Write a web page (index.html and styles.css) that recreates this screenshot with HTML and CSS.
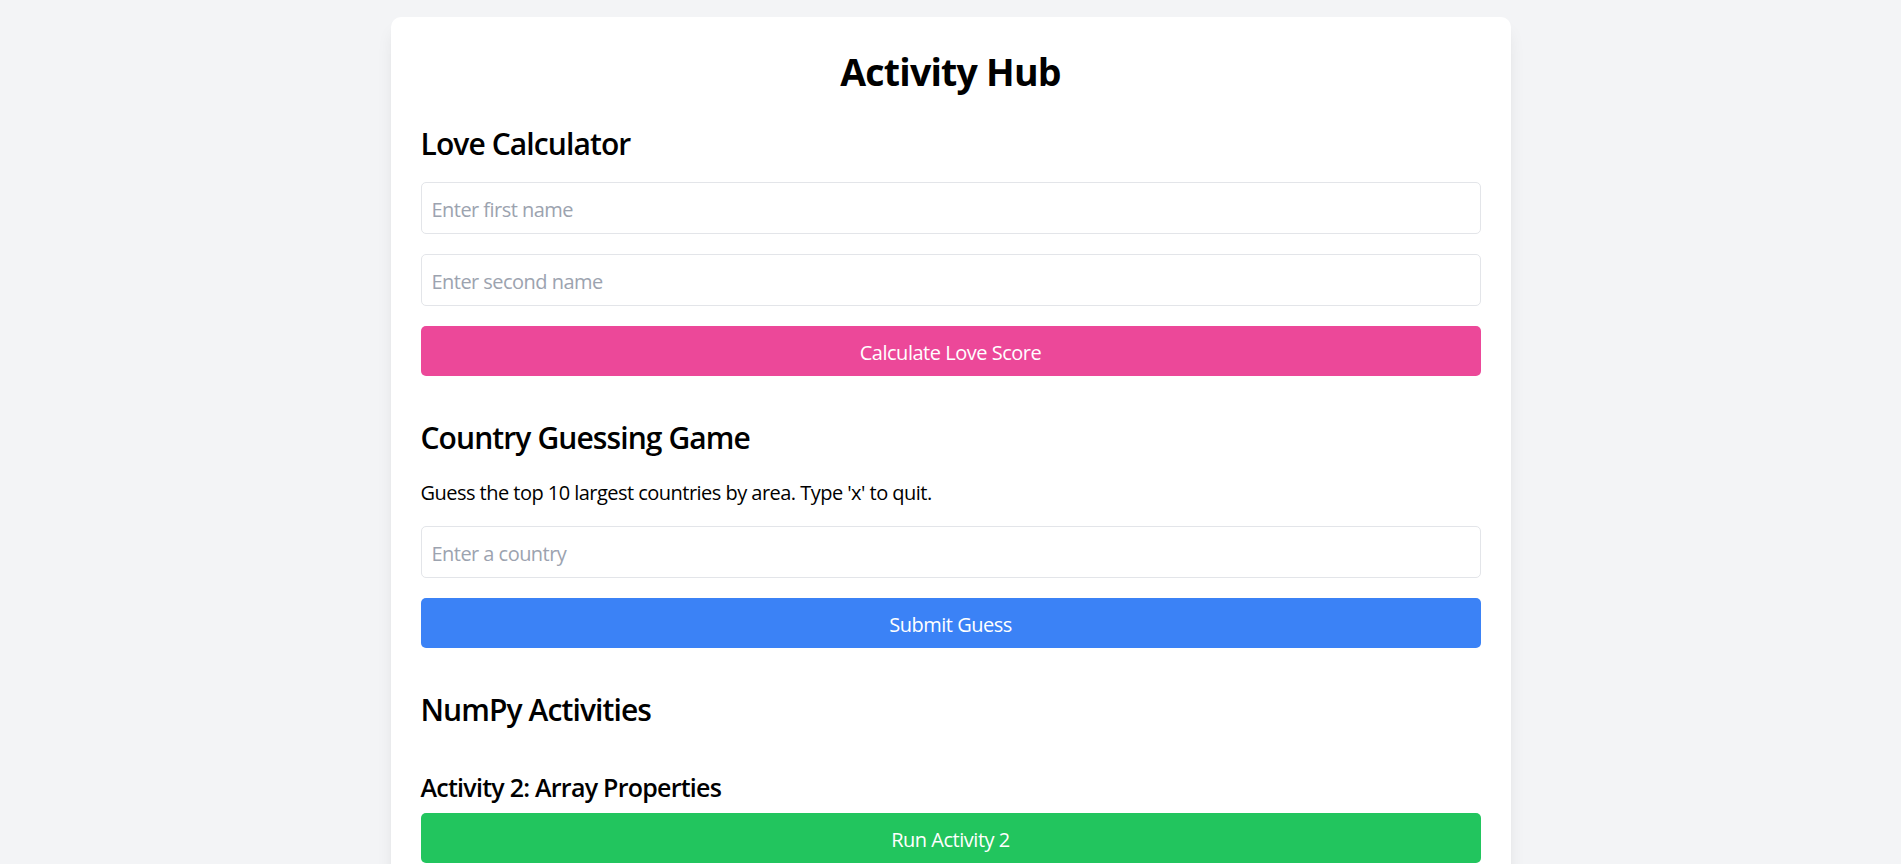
FILE: index.html
```html
<!DOCTYPE html>
<html lang="en">
<head>
<meta charset="utf-8">
<title>Activity Hub</title>
<link rel="stylesheet" href="styles.css">
</head>
<body>
<main class="card">
  <h1 class="title">Activity Hub</h1>

  <section class="section">
    <h2 class="section-title">Love Calculator</h2>
    <input class="field" type="text" placeholder="Enter first name">
    <input class="field" type="text" placeholder="Enter second name">
    <button class="btn btn-pink" type="button">Calculate Love Score</button>
  </section>

  <section class="section">
    <h2 class="section-title">Country Guessing Game</h2>
    <p class="text">Guess the top 10 largest countries by area. Type 'x' to quit.</p>
    <input class="field" type="text" placeholder="Enter a country">
    <button class="btn btn-blue" type="button">Submit Guess</button>
  </section>

  <section class="section section-numpy">
    <h2 class="section-title">NumPy Activities</h2>
    <div class="activity">
      <h3 class="activity-title">Activity 2: Array Properties</h3>
      <button class="btn btn-green" type="button">Run Activity 2</button>
    </div>
  </section>
</main>
</body>
</html>
```

FILE: styles.css
```css
* {
  box-sizing: border-box;
}

html, body {
  margin: 0;
  padding: 0;
}

body {
  background: #f3f4f6;
  font-family: "Open Sans", "Noto Sans", sans-serif;
  color: #000;
  min-height: 100vh;
  letter-spacing: -0.024em;
}

.card {
  width: 1120px;
  margin: 17px auto 0;
  padding: 30px;
  background: #fff;
  border-radius: 10px;
  box-shadow: 0 12px 18px -4px rgba(0, 0, 0, 0.1), 0 5px 7px -5px rgba(0, 0, 0, 0.1);
  display: flex;
  flex-direction: column;
  gap: 40px;
}

.title {
  margin: 0 0 -10px;
  height: 45px;
  padding-top: 4px;
  font-size: 37.5px;
  line-height: 41px;
  font-weight: 700;
  text-align: center;
  letter-spacing: -0.021em;
}

.section {
  display: flex;
  flex-direction: column;
  gap: 20px;
}

.section-numpy {
  gap: 40px;
}

.section-title {
  margin: 0;
  height: 40px;
  padding-top: 4px;
  font-size: 30px;
  line-height: 36px;
  font-weight: 600;
  letter-spacing: -0.03em;
}

.text {
  margin: 0;
  height: 30px;
  padding-top: 4px;
  font-size: 20px;
  line-height: 26px;
  letter-spacing: -0.0265em;
}

.field {
  display: block;
  width: 100%;
  height: 52px;
  margin: 0;
  padding: 2px 10px 0;
  border: 1px solid #e3e5e9;
  border-radius: 5px;
  font-family: inherit;
  font-size: 20px;
  letter-spacing: -0.027em;
  color: #000;
  background: #fff;
  outline: none;
}

.field::placeholder {
  color: #9ca3af;
}

.btn {
  display: block;
  width: 100%;
  height: 50px;
  margin: 0;
  padding: 2px 0 0;
  border: 0;
  border-radius: 5px;
  font-family: inherit;
  font-size: 20px;
  letter-spacing: -0.024em;
  color: #fff;
  cursor: pointer;
}

.btn-pink {
  background: #ec4899;
}

.btn-blue {
  background: #3b82f6;
}

.btn-green {
  background: #22c55e;
}

.activity {
  display: flex;
  flex-direction: column;
  gap: 10px;
}

.activity-title {
  margin: 0;
  height: 35px;
  padding-top: 4px;
  font-size: 25px;
  line-height: 31px;
  font-weight: 600;
  letter-spacing: -0.03em;
}
```
